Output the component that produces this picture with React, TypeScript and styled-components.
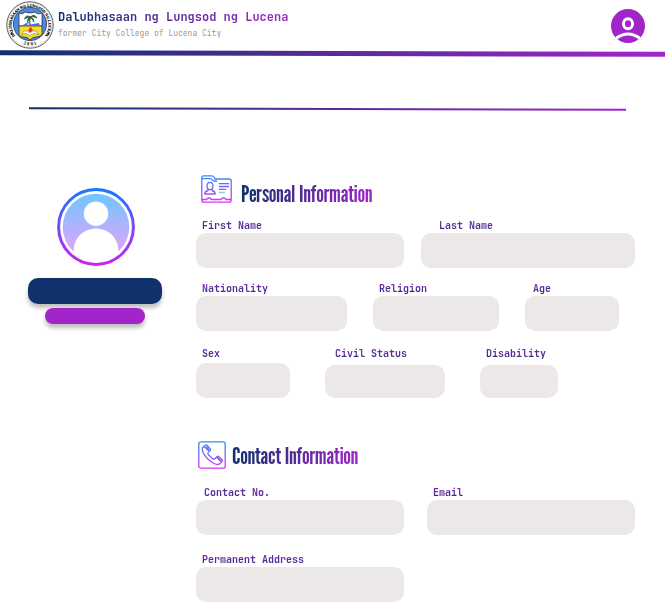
import React from "react";
import styled, { createGlobalStyle } from "styled-components";

const NAVY = "#10316b";
const PURPLE = "#a125c9";
const MONO = '"JetBrains Mono", "DejaVu Sans Mono", "Liberation Mono", monospace';

const GlobalStyle = createGlobalStyle`
  *, *::before, *::after { box-sizing: border-box; }
  body { margin: 0; background: #fff; font-family: ${MONO}; }
`;

const GradientText = styled.span`
  color: transparent;
  background: linear-gradient(90deg, ${NAVY}, ${PURPLE});
  background-clip: text;
  -webkit-background-clip: text;
`;

const Header = styled.header`
  display: flex;
  align-items: flex-start;
  height: 51px;
  padding: 0 20px 0 6px;
`;

const Seal = styled.svg`
  flex: none;
  width: 48px;
  height: 48px;
  margin-top: 1px;
`;

const Brand = styled.div`
  flex: 1;
  padding: 9px 0 0 4px;
`;

const SchoolName = styled(GradientText).attrs({ as: "h1" })`
  width: fit-content;
  margin: 0;
  font-size: 12px;
  font-weight: 700;
  line-height: 16px;
`;

const SchoolNote = styled.p`
  margin: 2px 0 0;
  font-size: 8px;
  line-height: 12px;
  color: #9c999c;
`;

const AccountButton = styled.button`
  width: 34px;
  height: 34px;
  margin-top: 9px;
  padding: 0;
  border: 0;
  border-radius: 50%;
  background: none;
  cursor: pointer;

  svg { display: block; }
`;

const Rule = styled.div<{ $thickness: number }>`
  height: ${(p) => p.$thickness}px;
  background: linear-gradient(90deg, ${NAVY}, ${PURPLE});
  transform: skewY(0.15deg);
`;

const Divider = styled.div`
  margin: 52px 39px 0 29px;
`;

const Main = styled.main`
  display: grid;
  grid-template-columns: 134px 1fr;
  column-gap: 34px;
  padding: 65px 30px 0 28px;
`;

const Profile = styled.aside`
  display: flex;
  flex-direction: column;
  align-items: center;
  padding-top: 13px;

  svg { display: block; margin-bottom: 12px; }
`;

const Pill = styled.div<{ $tone: "name" | "role" }>`
  width: ${(p) => (p.$tone === "name" ? "100%" : "100px")};
  height: ${(p) => (p.$tone === "name" ? 26 : 16)}px;
  margin-bottom: 4px;
  border-radius: ${(p) => (p.$tone === "name" ? 10 : 8)}px;
  background: ${(p) => (p.$tone === "name" ? NAVY : PURPLE)};
  box-shadow: 0 4px 4px rgba(0, 0, 0, 0.25);
`;

const Section = styled.section`
  margin-bottom: 43px;

  &:last-child { margin-bottom: 0; }
`;

const SectionHead = styled.div<{ $gap: number; $indent: number; $tall?: boolean }>`
  display: flex;
  align-items: flex-start;
  gap: ${(p) => p.$gap}px;
  height: ${(p) => (p.$tall ? 31 : 30)}px;
  margin-bottom: 14px;
  padding-left: ${(p) => p.$indent}px;

  svg { flex: none; display: block; }
`;

const SectionTitle = styled(GradientText).attrs({ as: "h2" })<{ $drop: number }>`
  margin: 0;
  padding-top: ${(p) => p.$drop}px;
  font-family: "League Gothic", "Roboto Condensed", "Liberation Sans Narrow", "Liberation Sans", sans-serif;
  font-size: 24px;
  font-weight: 400;
  line-height: 28px;
  white-space: nowrap;
`;

const Row = styled.div<{ $columns: string; $gap: number; $top?: number; $end?: number }>`
  display: grid;
  grid-template-columns: ${(p) => p.$columns};
  column-gap: ${(p) => p.$gap}px;
  align-items: end;
  margin-top: ${(p) => p.$top ?? 0}px;
  padding-right: ${(p) => p.$end ?? 0}px;
`;

const FieldBox = styled.div`
  display: flex;
  flex-direction: column;
  min-width: 0;
`;

const Label = styled.label<{ $indent: number; $space: number }>`
  width: fit-content;
  margin: 0 0 ${(p) => p.$space}px ${(p) => p.$indent}px;
  font-size: 10px;
  font-weight: 700;
  line-height: 14px;
  white-space: nowrap;
  color: transparent;
  background: linear-gradient(180deg, #8426b4 15%, #26307a 85%);
  background-clip: text;
  -webkit-background-clip: text;
`;

const Input = styled.input<{ $height: number }>`
  width: 100%;
  height: ${(p) => p.$height}px;
  padding: 0 10px;
  border: 0;
  border-radius: 10px;
  background: #ece8e7;
  font: 12px ${MONO};
  color: ${NAVY};
`;

type FieldProps = {
  id: string;
  label: string;
  type?: string;
  indent?: number;
  space?: number;
  height?: number;
};

function Field({ id, label, type = "text", indent = 6, space = 0, height = 35 }: FieldProps) {
  return (
    <FieldBox>
      <Label htmlFor={id} $indent={indent} $space={space}>{label}</Label>
      <Input id={id} type={type} $height={height} />
    </FieldBox>
  );
}

function SchoolSeal() {
  return (
    <Seal viewBox="0 0 48 48" role="img" aria-label="School seal">
      <defs>
        <path id="seal-top" d="M9.6 35.8 A18.4 18.4 0 1 1 38.4 35.8" />
        <path id="seal-bottom" d="M12 40.6 A20.8 20.8 0 0 0 36 40.6" />
        <clipPath id="seal-inner"><circle cx="24" cy="23" r="16.3" /></clipPath>
      </defs>
      <circle cx="24" cy="24" r="23.2" fill="#fff" stroke="#333" strokeWidth=".8" />
      <circle cx="24" cy="24" r="22" fill="none" stroke="#888" strokeWidth=".5" strokeDasharray="1 .8" />
      <text fontFamily="Liberation Serif, serif" fontSize="3.8" fontWeight="700" fill="#000" stroke="#000" strokeWidth=".15">
        <textPath href="#seal-top" startOffset="50%" textAnchor="middle">DALUBHASAAN NG LUNGSOD NG LUCENA</textPath>
      </text>
      <text fontFamily="Liberation Serif, serif" fontSize="5" fontWeight="700" fill="#111">
        <textPath href="#seal-bottom" startOffset="50%" textAnchor="middle">2 0 0 1</textPath>
      </text>
      <circle cx="24" cy="23" r="16.6" fill="#4f86e8" stroke="#222" strokeWidth=".7" />
      <g clipPath="url(#seal-inner)">
        <path d="M13 12 Q17 14 19 11 Q24 13 29 11 Q31 14 36 12 V25 H13Z" fill="#fff" stroke="#222" strokeWidth=".7" />
        <path d="M13 25 H36 V33 Q35 36 30 36 Q26 36 24 39 Q22 36 18 36 Q13 36 13 33Z" fill="#f7dc24" stroke="#222" strokeWidth=".7" />
      </g>
      <path d="M15 25 L24 20 L21 24 L33 22 L34 25Z" fill="#3676ff" />
      <path d="M24.2 24 Q23 19 24.6 16" fill="none" stroke="#653f2f" strokeWidth="1.1" />
      <path d="M24.5 16 Q20 13 18.5 18 Q22 16 24.5 16 Q21 17 21.4 21 Q23 18 24.5 16 Q28 12 31 17 Q27 15 24.5 16 Q28 17 28 21 Q26 18 24.5 16Z" fill="#236644" stroke="#17553a" strokeWidth=".7" />
      <path d="M24.6 26 Q28 29 25.7 31 H23.4 Q21 29 24.6 26Z" fill="#e93420" />
      <path d="M15.5 34 Q19 31 24 34.5 Q29 31 33 34 L30 30 Q26 29 24 32 Q21 29 18 30Z" fill="#fff" stroke="#777" strokeWidth=".6" />
      <circle cx="5.6" cy="33" r="1" fill="#111" />
      <circle cx="42.4" cy="33" r="1" fill="#111" />
    </Seal>
  );
}

function AccountIcon() {
  return (
    <svg width="34" height="34" viewBox="0 0 34 34" aria-hidden="true">
      <circle cx="17" cy="17" r="17" fill={PURPLE} />
      <ellipse cx="17" cy="14.8" rx="4.6" ry="5" fill="none" stroke="#fff" strokeWidth="3" />
      <path d="M5.2 29.2 Q17 20.8 28.8 29.2" fill="none" stroke="#fff" strokeWidth="3" />
    </svg>
  );
}

function Avatar() {
  return (
    <svg width="80" height="78" viewBox="-2 0 80 78" role="img" aria-label="Profile picture">
      <defs>
        <linearGradient id="ring" x1="0" y1="0" x2="0" y2="1">
          <stop offset="0" stopColor="#1c75ff" />
          <stop offset="1" stopColor="#c822f5" />
        </linearGradient>
        <linearGradient id="disc" x1="0" y1="0" x2="0" y2="1">
          <stop offset="0" stopColor="#6ec6ff" />
          <stop offset="1" stopColor="#f0a0fa" />
        </linearGradient>
        <clipPath id="disc-clip"><circle cx="39" cy="39" r="34" /></clipPath>
      </defs>
      <circle cx="39" cy="39" r="37.4" fill="#fff" stroke="url(#ring)" strokeWidth="3" />
      <circle cx="39" cy="39" r="33.3" fill="url(#disc)" />
      <circle cx="39" cy="25.7" r="12.2" fill="#fff" />
      <path clipPath="url(#disc-clip)" d="M16.5 78 V63 C17 49 27 40.5 39 40.5 S61 49 61.5 63 V78Z" fill="#fff" />
    </svg>
  );
}

function FolderIcon() {
  return (
    <svg width="31" height="28" viewBox="0 0 31 28" fill="none" strokeWidth="1.3" strokeLinejoin="round" aria-hidden="true">
      <defs>
        <linearGradient id="folder" gradientUnits="userSpaceOnUse" x1="0" y1="0" x2="0" y2="28">
          <stop offset="0" stopColor="#378cf5" />
          <stop offset=".5" stopColor="#7663f6" />
          <stop offset="1" stopColor="#e331f2" />
        </linearGradient>
      </defs>
      <g stroke="url(#folder)">
        <path d="M.8 25 V2.7 Q.8 .8 2.7 .8 H10.5 Q12.5 .8 13.2 2.2 L14 4 H28 Q30.2 4 30.2 6 V25 Q30.2 27.2 28 27.2 H3 Q.8 27.2 .8 25Z" />
        <path d="M1 3.6 H9 Q10.8 3.6 11.5 5 Q12 6 13.5 6 H16" />
        <path d="M.8 24.5 H5.5 L7 23 H9 L10.5 24.5 H20 L21.5 23 H23.5 L25 24.5 H30" />
        <ellipse cx="9" cy="11" rx="3" ry="3.7" />
        <path d="M7 14.2 V15.5 Q4 16 3.8 19 H14.2 Q14 16 11 15.5 V14.2" />
        <path d="M18 8.7 H28 M18 11.5 H28 M18 14.3 H25" />
      </g>
      <path d="M18 17.5 H24" stroke="#83c9f5" strokeWidth="1.5" />
    </svg>
  );
}

function PhoneIcon() {
  return (
    <svg width="28" height="28" viewBox="0 0 28 28" fill="none" stroke="url(#phone)" strokeWidth="1.3" strokeLinejoin="round" aria-hidden="true">
      <defs>
        <linearGradient id="phone" gradientUnits="userSpaceOnUse" x1="0" y1="0" x2="0" y2="28">
          <stop offset="0" stopColor="#378cf5" />
          <stop offset=".5" stopColor="#7663f6" />
          <stop offset="1" stopColor="#e331f2" />
        </linearGradient>
      </defs>
      <rect x=".8" y=".8" width="26.4" height="26.4" rx="2" />
      <path d="M6 5.2 L4.6 6.8 Q3.5 9 6 13.2 Q10 19.5 16 22.5 Q20 24.5 22 22.5 L23.5 21 L18.5 16.2 L16.5 18 Q15.5 18.7 14 17.3 L10.5 13.7 Q9.3 12.3 10.2 11.2 L11.2 10.2 Z" />
      <path d="M6 5.2 L7.7 4 Q8.5 3.7 9.2 4.5 L12.5 8.2 Q13 9 12.3 9.5 L11.2 10.2 M8 5.8 L11 9 M18.5 16.2 L19.5 15.4 Q20.2 15 21 15.7 L24.2 18.8 Q24.8 19.5 24.2 20.2 L23.5 21 M19.8 16.8 L23 20" />
    </svg>
  );
}

export default function App() {
  return (
    <>
      <GlobalStyle />
      <Header>
        <SchoolSeal />
        <Brand>
          <SchoolName>Dalubhasaan ng Lungsod ng Lucena</SchoolName>
          <SchoolNote>former City College of Lucena City</SchoolNote>
        </Brand>
        <AccountButton type="button" aria-label="Account"><AccountIcon /></AccountButton>
      </Header>
      <Rule $thickness={5} />
      <Divider><Rule $thickness={2} /></Divider>
      <Main>
        <Profile>
          <Avatar />
          <Pill $tone="name" />
          <Pill $tone="role" />
        </Profile>
        <form>
          <Section>
            <SectionHead $gap={9} $indent={5}>
              <FolderIcon />
              <SectionTitle $drop={5}>Personal Information</SectionTitle>
            </SectionHead>
            <Row $columns="208fr 214fr" $gap={17}>
              <Field id="first-name" label="First Name" />
              <Field id="last-name" label="Last Name" indent={18} />
            </Row>
            <Row $columns="151fr 126fr 94fr" $gap={26} $top={14} $end={16}>
              <Field id="nationality" label="Nationality" />
              <Field id="religion" label="Religion" />
              <Field id="age" label="Age" indent={8} />
            </Row>
            <Row $columns="94fr 120fr 78fr" $gap={35} $top={16} $end={77}>
              <Field id="sex" label="Sex" space={2} />
              <Field id="civil-status" label="Civil Status" indent={10} space={4} height={33} />
              <Field id="disability" label="Disability" space={4} height={33} />
            </Row>
          </Section>
          <Section>
            <SectionHead $gap={6} $indent={2} $tall>
              <PhoneIcon />
              <SectionTitle $drop={1}>Contact Information</SectionTitle>
            </SectionHead>
            <Row $columns="1fr 1fr" $gap={23}>
              <Field id="contact-no" label="Contact No." type="tel" indent={8} />
              <Field id="email" label="Email" type="email" />
            </Row>
            <Row $columns="1fr 1fr" $gap={23} $top={18}>
              <Field id="address" label="Permanent Address" />
            </Row>
          </Section>
        </form>
      </Main>
    </>
  );
}
